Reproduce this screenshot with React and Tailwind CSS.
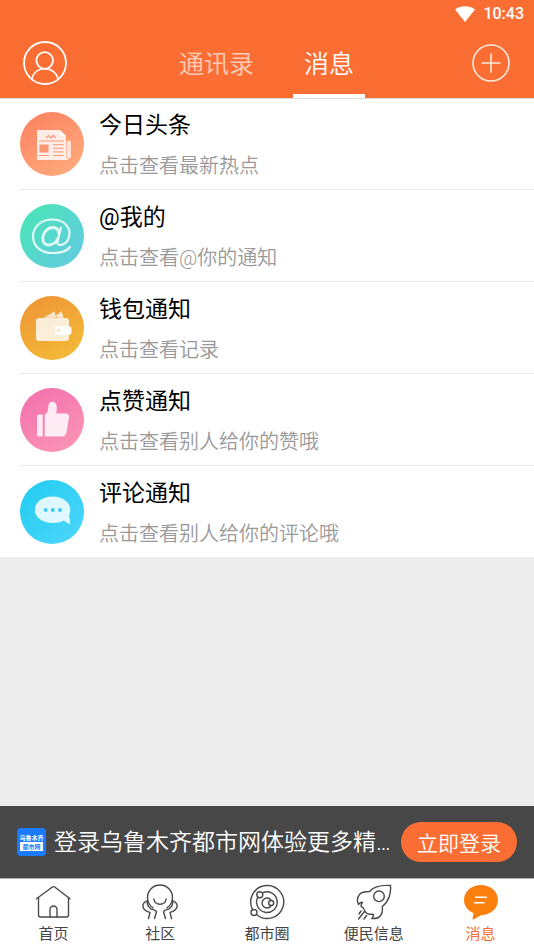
import { useState } from 'react'

function NewsIcon() {
  return (
    <svg viewBox="0 0 64 64" className="w-16 h-16 shrink-0" aria-hidden="true">
      <defs>
        <linearGradient id="g-news" x1="0.2" y1="0" x2="0.8" y2="1">
          <stop offset="0" stopColor="#fc8362" />
          <stop offset="1" stopColor="#ffab7c" />
        </linearGradient>
      </defs>
      <circle cx="32" cy="32" r="32" fill="url(#g-news)" />
      <rect x="46.5" y="28.5" width="4.5" height="18" rx="2" fill="#fff" opacity="0.7" />
      <path d="M17 18h22.5l6.5 6.5v21l2.5 2.5H18.5a1.5 1.5 0 0 1-1.5-1.5z" fill="#fff" opacity="0.83" />
      <path d="M40 18l6 6h-5a1 1 0 0 1-1-1z" fill="#fff" />
      <path d="M26 26l2.5-2.5 2.5 2.5 2-2.5 2.5 2.5" fill="none" stroke="#fb9673" strokeWidth="1.2" />
      <rect x="19.5" y="32.5" width="9" height="8" fill="#fb9673" />
      <path d="M19 29h25M19 43.5h10M33 32.7h10.5M33 36.3h10.5M33 39.9h10.5M33 43.5h10.5" stroke="#fb9673" strokeWidth="1" />
    </svg>
  )
}

function AtIcon() {
  return (
    <svg viewBox="0 0 64 64" className="w-16 h-16 shrink-0" aria-hidden="true">
      <defs>
        <linearGradient id="g-at" x1="0.1" y1="0.2" x2="0.9" y2="0.9">
          <stop offset="0" stopColor="#4be3ba" />
          <stop offset="1" stopColor="#63cbe0" />
        </linearGradient>
      </defs>
      <circle cx="32" cy="32" r="32" fill="url(#g-at)" />
      <g fill="none" stroke="#fff" strokeOpacity="0.83" strokeLinecap="round">
        <path d="M50 43C46.5 47.5 40.5 49 33 49C20.5 49 13 42 13 32.5C13 22.5 21.500 15.5 32.5 15.5C42.5 15.5 49.5 21.5 49.5 29.5C49.5 36.5 44.5 41 40.5 41C37.8 41 37 39.3 37.6 36.8L41 23.5" strokeWidth="2.2" />
        <path d="M38.8 29C38.5 25.5 36 23.5 32.8 23.5C27.5 23.5 22.8 28.8 22.8 34.5C22.8 38.5 25.2 41 28.5 41C32.8 41 36.3 38 37.5 35" strokeWidth="2.8" />
      </g>
    </svg>
  )
}

function WalletIcon() {
  return (
    <svg viewBox="0 0 64 64" className="w-16 h-16 shrink-0" aria-hidden="true">
      <defs>
        <linearGradient id="g-wallet" x1="0.2" y1="0" x2="0.8" y2="1">
          <stop offset="0" stopColor="#ef9638" />
          <stop offset="1" stopColor="#f3bb36" />
        </linearGradient>
      </defs>
      <circle cx="32" cy="32" r="32" fill="url(#g-wallet)" />
      <path d="M23.5 21.8L34.5 15.5l1.8 6.3z" fill="#fff" opacity="0.75" />
      <path d="M36 19.5l5.5-4.2 2.3 6.5h-6.8z" fill="#fff" opacity="0.75" />
      <rect x="16" y="22" width="33" height="23" rx="3" fill="#fff" opacity="0.8" />
      <rect x="35" y="30" width="16.5" height="9" rx="3" fill="#fff" opacity="0.95" />
      <circle cx="38.5" cy="34.5" r="1.5" fill="#f9e0ba" />
    </svg>
  )
}

function LikeIcon() {
  return (
    <svg viewBox="0 0 64 64" className="w-16 h-16 shrink-0" aria-hidden="true">
      <defs>
        <linearGradient id="g-like" x1="0.2" y1="0" x2="0.8" y2="1">
          <stop offset="0" stopColor="#f272ae" />
          <stop offset="1" stopColor="#fb94b4" />
        </linearGradient>
      </defs>
      <circle cx="32" cy="32" r="32" fill="url(#g-like)" />
      <path d="M22.7 26.5v22H18.5A1.5 1.5 0 0 1 17 47V29a2.5 2.5 0 0 1 2.5-2.5z" fill="#fff" opacity="0.84" />
      <path d="M24.7 48.5V26.5C27.3 25.5 28 23.5 28.2 19C28.3 15.5 29.8 13.8 32.2 13.8C35.5 13.8 37 16.5 36.8 20.5L36.3 25.5H45.5C48.5 25.5 49.5 27.5 48.9 30.5L46.3 45C45.9 47.3 44.6 48.5 42.5 48.5z" fill="#fff" opacity="0.84" />
    </svg>
  )
}

function CommentIcon() {
  return (
    <svg viewBox="0 0 64 64" className="w-16 h-16 shrink-0" aria-hidden="true">
      <defs>
        <linearGradient id="g-comment" x1="0.1" y1="0.1" x2="0.9" y2="0.9">
          <stop offset="0" stopColor="#25cdf0" />
          <stop offset="1" stopColor="#4bd5fb" />
        </linearGradient>
      </defs>
      <circle cx="32" cy="32" r="32" fill="url(#g-comment)" />
      <path d="M32.5 16.5C42.5 16.5 50.3 22 50.3 29.8C50.3 32.5 49.3 35 49 37C49 38.5 50 37.5 50 39V44.5L43.5 40.5C40.5 42.3 36.5 43 32.5 43C22.5 43 14.8 37.5 14.8 29.8C14.8 22 22.5 16.5 32.5 16.5z" fill="#fff" opacity="0.84" />
      <g fill="#3fcdf0">
        <circle cx="25.7" cy="30" r="2" />
        <circle cx="32.8" cy="30" r="2" />
        <circle cx="40" cy="30" r="2" />
      </g>
    </svg>
  )
}

const messages = [
  { key: 'news', title: '今日头条', desc: '点击查看最新热点', Icon: NewsIcon },
  { key: 'at', title: '@我的', desc: '点击查看@你的通知', Icon: AtIcon },
  { key: 'wallet', title: '钱包通知', desc: '点击查看记录', Icon: WalletIcon },
  { key: 'like', title: '点赞通知', desc: '点击查看别人给你的赞哦', Icon: LikeIcon },
  { key: 'comment', title: '评论通知', desc: '点击查看别人给你的评论哦', Icon: CommentIcon },
]

const navItems = [
  {
    key: 'home',
    label: '首页',
    icon: (
      <>
        <path d="M3.5 13.5V31a2 2 0 0 0 2 2h26a2 2 0 0 0 2-2V13.5" />
        <path d="M1.5 14.8L17 3.2q1.5-1.1 3 0L35 14.8" />
        <path d="M15 33V25.5a3.5 3.5 0 0 1 7 0V33" />
      </>
    ),
  },
  {
    key: 'community',
    label: '社区',
    icon: (
      <>
        <path d="M11 23.8A12.5 12.5 0 1 1 25 23.8" />
        <path d="M11.8 15a6.3 6.3 0 0 0 12.4 0" />
        <path d="M5.3 16.8C1.5 18 .5 21 1.2 23.500C2 26.5 4.5 27.3 8 28.5L6.5 34.5" />
        <path d="M5.3 16.8C5 20.5 6.5 23.3 9 24.8C11.5 26 13.5 26 14.5 27.8L12.5 34.5" />
        <path d="M30.7 16.8C34.5 18 35.5 21 34.8 23.5C34 26.5 31.5 27.3 28 28.5L29.5 34.5" />
        <path d="M30.7 16.8C31 20.5 29.5 23.3 27 24.8C24.5 26 22.5 26 21.5 27.8L23.5 34.5" />
      </>
    ),
  },
  {
    key: 'city',
    label: '都市圈',
    icon: (
      <>
        <path d="M3.7 25.8A16.5 16.5 0 1 1 7.5 30.5" />
        <path d="M13.6 8.8A10.3 10.3 0 1 1 8.9 13.2" />
        <path d="M21.8 15.7A5 5 0 1 0 21.8 22.3" />
        <circle cx="22.2" cy="19" r="2.5" />
        <circle cx="10.8" cy="10.8" r="3" />
        <circle cx="5" cy="28.5" r="3" />
      </>
    ),
  },
  {
    key: 'service',
    label: '便民信息',
    icon: (
      <>
        <path d="M34.5 1.5C26.5 1 18.5 1.8 13.5 7.5C10 7.5 5.5 8 3.5 10.5C1 13.5 1 17.5 2.5 20.5C3.3 18.8 4.8 18.2 6.5 18.2C5.5 19.5 4.8 21 5.2 22.5C7 23 7.5 24 8.3 26C9.5 28.8 11 30 13.5 30.3C15 30.5 16 29.8 17.5 30.5C17.5 32.5 16.5 33.5 15.8 34.5C19.5 34.8 23 34 25 31C27 28 26.500 25 26.3 22.5C32.5 18 35.3 9.5 34.5 1.5z" />
        <circle cx="23" cy="12.3" r="5.3" />
        <path d="M5 27l-2 3M8.5 27.5L2.5 35M10.5 31.5L8 35" />
      </>
    ),
  },
  {
    key: 'message',
    label: '消息',
    icon: (
      <>
        <path d="M18 1C27.5 1 35 7.5 35 16C35 24.5 27.5 31 18.5 31L10.5 35.5Q9.2 36 9.6 34.5L10.5 29C4.5 26.5 1 21.5 1 16C1 7.5 8.5 1 18 1z" fill="#fb800e" stroke="none" />
        <path d="M12.5 13.3h11M11.5 18.8h9.5" stroke="#fff" />
      </>
    ),
  },
]

function StatusBar() {
  return (
    <div className="h-7 flex items-center justify-end gap-2 pr-[10px] text-white">
      <svg viewBox="0 0 20 16" className="w-5 h-4" aria-hidden="true">
        <path d="M0 3.500C5.500-.8 14.500-.8 20 3.500L10 16z" fill="#fff" />
      </svg>
      <span className="font-[Roboto,sans-serif] text-base leading-5 font-medium">10:43</span>
    </div>
  )
}

function Header({ tab, setTab }) {
  const tabs = ['通讯录', '消息']
  return (
    <header className="relative bg-[#fa6e34] shadow-[0_1px_0_#dcdcdc]">
      <StatusBar />
      <div className="h-[70px] pl-[23px] pr-6 grid grid-cols-[1fr_auto_1fr] items-center">
        <button aria-label="我" className="justify-self-start">
          <svg viewBox="0 0 44 44" className="w-11 h-11" fill="none" stroke="#fff" strokeWidth="1.8" aria-hidden="true">
            <circle cx="22" cy="22" r="21" />
            <circle cx="21.7" cy="19.5" r="8.3" />
            <path d="M8.8 37.8C10.5 31.5 15.5 27.7 21.8 27.7S33.5 31.5 35.2 37.8" />
          </svg>
        </button>
        <nav className="h-full flex gap-7">
          {tabs.map(name => (
            <button
              key={name}
              onClick={() => setTab(name)}
              className={`h-full px-[11px] border-y-4 border-t-transparent text-[25px] font-[350] ${
                tab === name ? 'text-white border-b-white' : 'text-white/65 border-b-transparent'
              }`}
            >
              {name}
            </button>
          ))}
        </nav>
        <button aria-label="添加" className="justify-self-end">
          <svg viewBox="1 1 38 38" className="w-[38px] h-[38px]" fill="none" stroke="#fff" strokeOpacity="0.85" strokeWidth="1.6" aria-hidden="true">
            <circle cx="20" cy="20" r="18" />
            <path d="M20 10.5v19M10.5 20h19" />
          </svg>
        </button>
      </div>
    </header>
  )
}

function LoginBanner() {
  return (
    <div className="h-[72px] bg-[#474747] px-[17px] flex items-center gap-2">
      <div className="w-[29px] h-7 shrink-0 rounded bg-[#1a7bff] text-white flex flex-col items-center justify-center text-[6px] leading-[9px] font-bold">
        <span className="whitespace-nowrap">乌鲁木齐</span>
        <span className="bg-white text-[#1a7bff] px-[2px] whitespace-nowrap">都市网</span>
      </div>
      <p className='flex-1 min-w-0 pt-[2px] truncate font-[Roboto,"Noto_Sans_CJK_SC",sans-serif] text-white text-[23px] leading-8 font-[350]'>
        登录乌鲁木齐都市网体验更多精…
      </p>
      <button className="h-10 px-4 shrink-0 rounded-full bg-[#fa6e34] text-white text-[21px] leading-8 font-[350] whitespace-nowrap">
        立即登录
      </button>
    </div>
  )
}

function BottomNav({ page, setPage }) {
  return (
    <nav className="h-[71px] bg-white border-t border-[#b0b0b0] flex">
      {navItems.map(n => (
        <button
          key={n.key}
          onClick={() => setPage(n.key)}
          className={`flex-1 flex flex-col items-center pt-[5px] ${
            page === n.key ? 'text-[#fa6e34]' : 'text-[#444]'
          }`}
        >
          <svg
            viewBox="0 0 36 36"
            className="w-9 h-9"
            fill="none"
            stroke="#4a4a4a"
            strokeWidth="1.4"
            strokeLinecap="round"
            strokeLinejoin="round"
            aria-hidden="true"
          >
            {n.icon}
          </svg>
          <span className="text-[15px] leading-[26px]">{n.label}</span>
        </button>
      ))}
    </nav>
  )
}

export default function App() {
  const [tab, setTab] = useState('消息')
  const [page, setPage] = useState('message')

  return (
    <div className='min-h-screen flex flex-col bg-[#ededed] font-["Noto_Sans_CJK_SC",sans-serif]'>
      <Header tab={tab} setTab={setTab} />

      <main className="flex-1">
        <ul className='bg-white pl-5 divide-y divide-[#e8e8e8] font-[Roboto,"Noto_Sans_CJK_SC",sans-serif]'>
          {messages.map(({ key, title, desc, Icon }) => (
            <li key={key}>
              <button className="w-full flex items-center gap-[15px] pt-[10px] pb-[9px] text-left">
                <Icon />
                <span className="flex flex-col gap-3 pt-1">
                  <span className="text-[23px] leading-7 text-black">{title}</span>
                  <span className="text-[20px] leading-7 text-[#999] font-[350]">{desc}</span>
                </span>
              </button>
            </li>
          ))}
        </ul>
      </main>

      <LoginBanner />
      <BottomNav page={page} setPage={setPage} />
    </div>
  )
}
